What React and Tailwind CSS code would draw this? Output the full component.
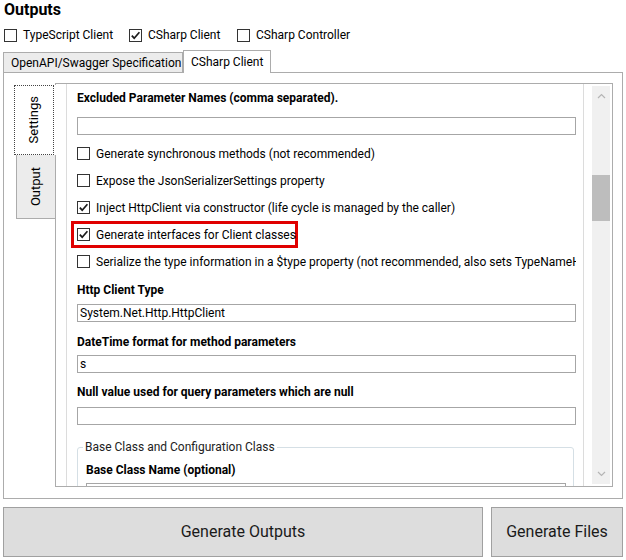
import React from 'react';

function Box({ checked }) {
    return (
        <span className="flex h-[13px] w-[13px] shrink-0 items-center justify-center border border-[#333] bg-white">
            {checked && (
                <svg width="11" height="11" viewBox="0 0 11 11">
                    <path d="M1.8 5.6 L4.2 8.2 L9.4 2.2" fill="none" stroke="#1a1a1a" strokeWidth="1.7" />
                </svg>
            )}
        </span>
    );
}

function Check({ checked, label }) {
    return (
        <div className="flex h-[27px] items-center gap-[6px]">
            <Box checked={checked} />
            <span className="whitespace-nowrap">{label}</span>
        </div>
    );
}

function Label({ children, className = '' }) {
    return <div className={'h-[18px] font-bold leading-[18px] ' + className}>{children}</div>;
}

function TextBox({ value, className = 'w-[499px]' }) {
    return (
        <div className={'h-[18px] border border-[#a6a6a6] bg-white px-[2px] text-[12px] leading-[16px] ' + className}>
            {value}
        </div>
    );
}

export default function App() {
    return (
        <div className="h-[560px] w-[626px] overflow-hidden bg-white font-['Segoe_UI',Roboto,sans-serif] text-[12px] text-black">
            <div className="h-[25px] pl-[4px] text-[16px] font-bold leading-[20px]">Outputs</div>

            <div className="flex h-[20px] items-center pl-[4px]">
                <div className="flex w-[125px] items-center gap-[6px]">
                    <Box />
                    <span>TypeScript Client</span>
                </div>
                <div className="flex w-[108px] items-center gap-[6px]">
                    <Box checked />
                    <span>CSharp Client</span>
                </div>
                <div className="flex items-center gap-[6px]">
                    <Box />
                    <span>CSharp Controller</span>
                </div>
            </div>

            <div className="mt-[5px] flex h-[22px] items-end pl-[3px]">
                <div className="flex h-[20px] w-[180px] items-center border border-b-0 border-[#acacac] bg-[#ececec] pl-[7px]">
                    OpenAPI/Swagger Specification
                </div>
                <div className="relative z-10 -mb-[1px] flex h-[23px] w-[88px] items-center border border-b-0 border-[#acacac] bg-white pl-[7px]">
                    CSharp Client
                </div>
            </div>

            <div className="mx-[3px] flex h-[427px] w-[620px] border border-[#acacac] pl-[10px] pt-[10px]">
                <div className="flex w-[41px] flex-col pt-[2px]">
                    <div className="relative z-10 h-[70px] w-[42px] bg-white">
                        <div className="flex h-full w-[40px] items-center justify-center border border-dotted border-[#444]">
                            <span className="rotate-180 text-[13px] [writing-mode:vertical-rl]">Settings</span>
                        </div>
                    </div>
                    <div className="relative z-10 ml-[2px] flex h-[64px] w-[40px] items-center justify-center border border-t-0 border-[#acacac] bg-[#ececec]">
                        <span className="rotate-180 text-[13px] [writing-mode:vertical-rl]">Output</span>
                    </div>
                </div>

                <div className="flex h-[404px] w-[558px] border border-[#acacac] pl-[10px]">
                    <div className="h-full w-[518px] overflow-hidden border-x border-[#dcdcdc] pl-[10px]">
                        <Label className="mt-[5px]">Excluded Parameter Names (comma separated).</Label>
                        <TextBox className="mt-[10px] w-[499px]" />

                        <div className="mt-[5px]">
                            <Check label="Generate synchronous methods (not recommended)" />
                            <Check label="Expose the JsonSerializerSettings property" />
                            <Check checked label="Inject HttpClient via constructor (life cycle is managed by the caller)" />
                            <div className="flex h-[27px] items-center">
                                <div className="-ml-[6px] flex h-[27px] w-[227px] items-center gap-[6px] border-[3px] border-[#e00000] pl-[3px]">
                                    <Box checked />
                                    <span className="whitespace-nowrap">Generate interfaces for Client classes</span>
                                </div>
                            </div>
                            <div className="w-[499px] overflow-hidden">
                                <Check label="Serialize the type information in a $type property (not recommended, also sets TypeNameHandling)" />
                            </div>
                        </div>

                        <Label className="mt-[6px]">Http Client Type</Label>
                        <TextBox className="mt-[5px] w-[499px]" value="System.Net.Http.HttpClient" />

                        <Label className="mt-[11px]">DateTime format for method parameters</Label>
                        <TextBox className="mt-[4px] w-[499px]" value="s" />

                        <Label className="mt-[10px]">Null value used for query parameters which are null</Label>
                        <TextBox className="mt-[6px] w-[499px]" />

                        <fieldset className="mt-[14px] w-[497px] rounded-[3px] border border-[#d5dfe5] pl-[8px]">
                            <legend className="-ml-[3px] px-[2px] leading-[16px] text-[#222]">Base Class and Configuration Class</legend>
                            <Label className="mt-[6px]">Base Class Name (optional)</Label>
                            <TextBox className="mt-[4px] w-[480px]" />
                        </fieldset>
                    </div>

                    <div className="ml-[8px] flex h-full w-[18px] flex-col py-[2px]">
                        <div className="flex h-full flex-col items-center bg-[#f0f0f0]">
                            <svg className="mt-[7px]" width="9" height="6" viewBox="0 0 9 6">
                                <path d="M1 5 L4.5 1.5 L8 5" fill="none" stroke="#b5b5b5" strokeWidth="1.2" />
                            </svg>
                            <div className="mt-[76px] h-[46px] w-full bg-[#bdbdbd]" />
                            <div className="flex-1" />
                            <svg className="mb-[7px]" width="9" height="6" viewBox="0 0 9 6">
                                <path d="M1 1 L4.5 4.5 L8 1" fill="none" stroke="#b5b5b5" strokeWidth="1.2" />
                            </svg>
                        </div>
                    </div>
                </div>
            </div>

            <div className="mt-[8px] flex gap-[8px] px-[3px]">
                <button className="h-[50px] w-[480px] border border-[#a0a0a0] bg-[#dddddd] text-[16px] text-[#1a1a1a]">
                    Generate Outputs
                </button>
                <button className="h-[50px] w-[132px] border border-[#a0a0a0] bg-[#dddddd] text-[16px] text-[#1a1a1a]">
                    Generate Files
                </button>
            </div>
        </div>
    );
}
